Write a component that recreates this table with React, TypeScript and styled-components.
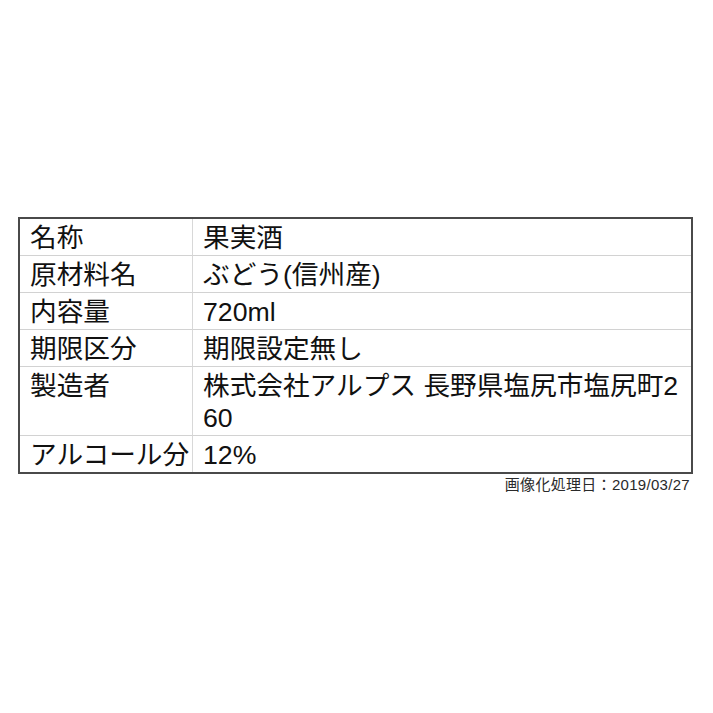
import React from "react";
import styled, { createGlobalStyle } from "styled-components";

const GlobalStyle = createGlobalStyle`
	html, body {
		margin: 0;
		padding: 0;
		background: #ffffff;
	}
	body {
		font-family: "Liberation Sans", "Noto Sans CJK JP", sans-serif;
		color: #111111;
	}
`;

const Page = styled.div`
	width: 713px;
	height: 713px;
	box-sizing: border-box;
	padding: 217px 20px 0 18px;
`;

const Sheet = styled.div`
	display: grid;
	grid-template-columns: 173px 1fr;
	border: 2px solid #4a4a4a;
	background: #ffffff;
`;

const Cell = styled.div<{ $label?: boolean; $last?: boolean }>`
	box-sizing: border-box;
	padding: 3px 6px 1px 10px;
	font-size: 26.67px;
	line-height: 32px;
	border-bottom: ${(p) => (p.$last ? "none" : "1px solid #d2d2d2")};
	border-right: ${(p) => (p.$label ? "1px solid #d8d8d8" : "none")};
	white-space: ${(p) => (p.$label ? "nowrap" : "normal")};
	word-break: break-all;
`;

const Stamp = styled.div`
	display: flex;
	justify-content: flex-end;
	padding: 1px 3px 0 0;
	font-size: 15px;
	line-height: 20px;
	color: #2a2a2a;
	letter-spacing: 0.3px;
`;

const rows: [string, string][] = [
	["名称", "果実酒"],
	["原材料名", "ぶどう(信州産)"],
	["内容量", "720ml"],
	["期限区分", "期限設定無し"],
	["製造者", "株式会社アルプス 長野県塩尻市塩尻町260"],
	["アルコール分", "12%"],
];

const App = () => {
	return (
		<Page>
			<GlobalStyle />
			<Sheet>
				{rows.map(([label, value], i) => {
					const last = i === rows.length - 1;
					return (
						<React.Fragment key={label}>
							<Cell $label $last={last}>
								{label}
							</Cell>
							<Cell $last={last}>{value}</Cell>
						</React.Fragment>
					);
				})}
			</Sheet>
			<Stamp>画像化処理日：2019/03/27</Stamp>
		</Page>
	);
};

export default App;
